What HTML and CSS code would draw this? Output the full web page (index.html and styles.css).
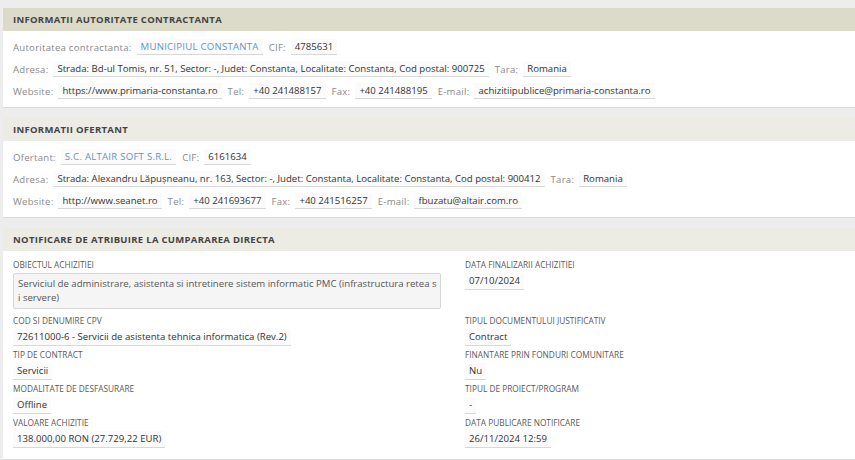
FILE: index.html
```html
<!DOCTYPE html>
<html>
  <head>
    <title>Notificare de atribuire</title>
    <link rel="stylesheet" href="styles.css">
  </head>
  <body>
    <div class="page">
      <div class="panel">
        <div class="panel-head active">INFORMATII AUTORITATE CONTRACTANTA</div>
        <div class="panel-body">
          <div class="line">
            <span class="lbl">Autoritatea contractanta:</span>
            <span class="val link">MUNICIPIUL CONSTANTA</span>
            <span class="lbl">CIF:</span>
            <span class="val">4785631</span>
          </div>
          <div class="line">
            <span class="lbl">Adresa:</span>
            <span class="val">Strada: Bd-ul Tomis, nr. 51, Sector: -, Judet: Constanta, Localitate: Constanta, Cod postal: 900725</span>
            <span class="lbl">Tara:</span>
            <span class="val">Romania</span>
          </div>
          <div class="line">
            <span class="lbl">Website:</span>
            <span class="val">https://www.primaria-constanta.ro</span>
            <span class="lbl">Tel:</span>
            <span class="val">+40 241488157</span>
            <span class="lbl">Fax:</span>
            <span class="val">+40 241488195</span>
            <span class="lbl">E-mail:</span>
            <span class="val">achizitiipublice@primaria-constanta.ro</span>
          </div>
        </div>
      </div>

      <div class="panel">
        <div class="panel-head">INFORMATII OFERTANT</div>
        <div class="panel-body">
          <div class="line">
            <span class="lbl">Ofertant:</span>
            <span class="val link">S.C. ALTAIR SOFT S.R.L.</span>
            <span class="lbl">CIF:</span>
            <span class="val">6161634</span>
          </div>
          <div class="line">
            <span class="lbl">Adresa:</span>
            <span class="val">Strada: Alexandru Lăpușneanu, nr. 163, Sector: -, Judet: Constanta, Localitate: Constanta, Cod postal: 900412</span>
            <span class="lbl">Tara:</span>
            <span class="val">Romania</span>
          </div>
          <div class="line">
            <span class="lbl">Website:</span>
            <span class="val">http://www.seanet.ro</span>
            <span class="lbl">Tel:</span>
            <span class="val">+40 241693677</span>
            <span class="lbl">Fax:</span>
            <span class="val">+40 241516257</span>
            <span class="lbl">E-mail:</span>
            <span class="val">fbuzatu@altair.com.ro</span>
          </div>
        </div>
      </div>

      <div class="panel">
        <div class="panel-head">NOTIFICARE DE ATRIBUIRE LA CUMPARAREA DIRECTA</div>
        <div class="panel-body grid">
          <div class="field">
            <div class="flbl">OBIECTUL ACHIZITIEI</div>
            <div class="area">Serviciul de administrare, asistenta si intretinere sistem informatic PMC (infrastructura retea si servere)</div>
          </div>
          <div class="field">
            <div class="flbl">DATA FINALIZARII ACHIZITIEI</div>
            <span class="fval">07/10/2024</span>
          </div>
          <div class="field">
            <div class="flbl">COD SI DENUMIRE CPV</div>
            <span class="fval">72611000-6 - Servicii de asistenta tehnica informatica (Rev.2)</span>
          </div>
          <div class="field">
            <div class="flbl">TIPUL DOCUMENTULUI JUSTIFICATIV</div>
            <span class="fval">Contract</span>
          </div>
          <div class="field">
            <div class="flbl">TIP DE CONTRACT</div>
            <span class="fval">Servicii</span>
          </div>
          <div class="field">
            <div class="flbl">FINANTARE PRIN FONDURI COMUNITARE</div>
            <span class="fval">Nu</span>
          </div>
          <div class="field">
            <div class="flbl">MODALITATE DE DESFASURARE</div>
            <span class="fval">Offline</span>
          </div>
          <div class="field">
            <div class="flbl">TIPUL DE PROIECT/PROGRAM</div>
            <span class="fval">-</span>
          </div>
          <div class="field">
            <div class="flbl">VALOARE ACHIZITIE</div>
            <span class="fval">138.000,00 RON (27.729,22 EUR)</span>
          </div>
          <div class="field">
            <div class="flbl">DATA PUBLICARE NOTIFICARE</div>
            <span class="fval">26/11/2024 12:59</span>
          </div>
        </div>
      </div>
    </div>
  </body>
</html>
```

FILE: styles.css
```css
body{
  margin: 0;
  background-color: #ededed;
  font-family: "Open Sans", sans-serif;
  overflow: hidden;
}
.page{
  width: 880px;
  padding: 8px 0 0 3px;
}
.panel{
  background-color: #fff;
  border-bottom: 1px solid #dadada;
  margin-bottom: 10px;
}
.panel-head{
  height: 23px;
  line-height: 23px;
  padding-left: 10px;
  background-color: #ecebe4;
  font-size: 9.5px;
  font-weight: bold;
  letter-spacing: 0.3px;
  color: #444;
}
.panel-head.active{
  background-color: #dcdac9;
}
.panel-body{
  padding: 5px 10px 5px;
}
.line{
  display: flex;
  align-items: center;
  height: 22px;
  font-size: 9.6px;
}
.lbl{
  color: #8a8a8a;
  letter-spacing: 0.25px;
  margin-right: 5px;
}
.val{
  color: #333;
  background-color: #fbfbfb;
  border-bottom: 1px solid #d8d8d8;
  padding: 1px 4px;
  margin-right: 6px;
}
.val.link{
  color: #5d97c4;
  letter-spacing: 0.25px;
}
.grid{
  display: grid;
  grid-template-columns: 428px 1fr;
  column-gap: 24px;
  padding-top: 8px;
  padding-bottom: 8px;
}
.field{
  display: flex;
  flex-direction: column;
  align-items: flex-start;
  margin-bottom: 3px;
}
.flbl{
  font-size: 8.3px;
  line-height: 11px;
  color: #5a5a5a;
  margin-bottom: 3px;
}
.fval{
  font-size: 9.6px;
  line-height: 14px;
  color: #333;
  background-color: #fbfbfb;
  border-bottom: 1px solid #d8d8d8;
  padding: 1px 4px;
}
.area{
  align-self: stretch;
  font-size: 9.6px;
  line-height: 14px;
  color: #555;
  background-color: #f5f5f5;
  border: 1px solid #d6d6d6;
  border-radius: 2px;
  padding: 3px 2px 3px 4px;
  height: 28px;
  margin-bottom: 3px;
  word-break: break-all;
}
```
